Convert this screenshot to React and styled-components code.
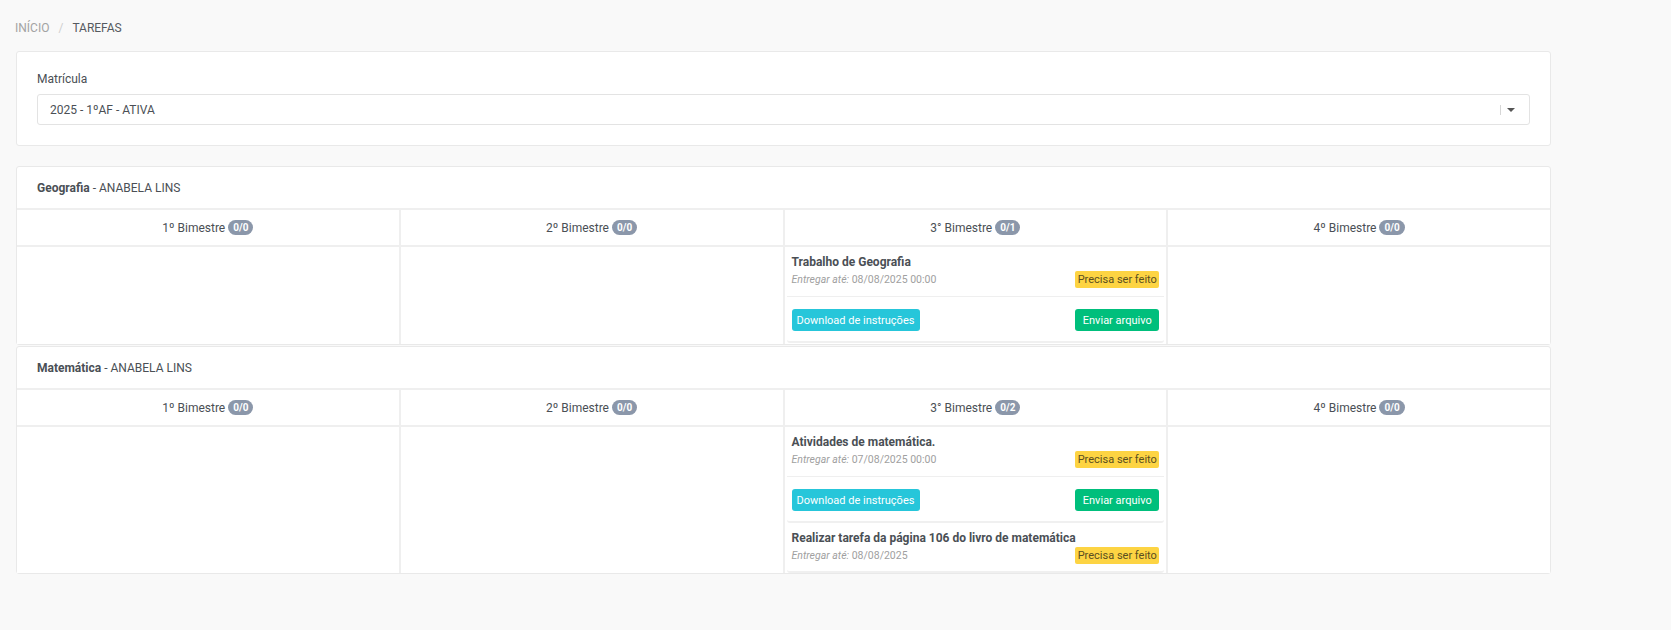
import React from "react"
import styled, { createGlobalStyle } from "styled-components"

const GlobalStyle = createGlobalStyle`
  body {
    margin: 0;
    background: #f9f9f9;
    font-family: Roboto, "Liberation Sans", sans-serif;
    color: #4a4f55;
    font-size: 12px;
  }
`

const Page = styled.div`
  width: 1536px;
  padding: 18px 0 40px 15px;
`
const Breadcrumb = styled.div`
  display: flex;
  align-items: center;
  gap: 9px;
  font-size: 12px;
  text-transform: uppercase;
  height: 20px;
  margin-bottom: 13px;
`
const Crumb = styled.span`
  color: ${p => (p.$active ? "#555a60" : "#a3a3a3")};
`
const Sep = styled.span`
  color: #cfcfcf;
`
const Card = styled.div`
  background: #fff;
  border: 1px solid #e9e9e9;
  border-radius: 3px;
  margin-left: 1px;
  margin-bottom: ${p => p.$gap || "1px"};
`
const FilterBody = styled.div`
  padding: 20px 20px 20px 20px;
`
const Label = styled.div`
  font-size: 12px;
  color: #4a4f55;
  line-height: 14px;
  margin-bottom: 8px;
`
const Select = styled.div`
  height: 29px;
  border: 1px solid #e3e3e3;
  border-radius: 3px;
  display: flex;
  align-items: center;
  padding: 0 12px;
  font-size: 12px;
  color: #4a4f55;
`
const SelectValue = styled.span`
  flex: 1;
`
const SelectBar = styled.span`
  width: 1px;
  height: 10px;
  background: #d6d6d6;
  margin-right: 6px;
`
const Caret = styled.span`
  width: 0;
  height: 0;
  border-left: 4px solid transparent;
  border-right: 4px solid transparent;
  border-top: 4px solid #555;
  margin-right: 2px;
`
const SubjectHeader = styled.div`
  padding: 0 20px;
  height: 41px;
  display: flex;
  align-items: center;
  font-size: 12px;
  border-bottom: 2px solid #efefef;
`
const Strong = styled.b`
  font-weight: 700;
`
const Grid = styled.div`
  display: grid;
  grid-template-columns: repeat(4, 1fr);
  column-gap: 2px;
  background: #efefef;
`
const HeadCell = styled.div`
  background: #fff;
  height: 35px;
  display: flex;
  align-items: center;
  justify-content: center;
  gap: 3px;
  font-size: 12px;
  margin-bottom: 2px;
`
const Count = styled.span`
  background: #8b97aa;
  color: #fff;
  font-weight: 700;
  font-size: 10px;
  border-radius: 8px;
  padding: 1px 5px;
  line-height: 13px;
`
const BodyCell = styled.div`
  background: #fff;
  padding: 0 2px;
  min-height: 97px;
`
const Task = styled.div`
  padding: 6px 5px ${p => (p.$compact ? "7px" : "10px")};
  border-bottom: 2px solid #f0f0f0;
  border-radius: 3px;
`
const TaskTitle = styled.div`
  font-weight: 700;
  font-size: 12px;
  line-height: 18px;
  color: #4a4f55;
`
const DateRow = styled.div`
  display: flex;
  align-items: center;
  justify-content: space-between;
  height: 17px;
`
const DateText = styled.span`
  color: #a0a0a0;
  font-size: 10.5px;
`
const Italic = styled.i`
  font-style: italic;
`
const Status = styled.span`
  background: #fdd443;
  color: #5a4e20;
  font-size: 11px;
  width: 84px;
  height: 17px;
  line-height: 17px;
  text-align: center;
  border-radius: 2px;
`
const Divider = styled.div`
  height: 1px;
  background: #efefef;
  margin: 8px -5px 12px;
`
const Actions = styled.div`
  display: flex;
  justify-content: space-between;
`
const Button = styled.button`
  border: none;
  border-radius: 3px;
  color: #fff;
  font-family: inherit;
  font-size: 11px;
  height: 22px;
  padding: 0;
  width: ${p => p.$w};
  background: ${p => p.$bg};
`

const subjects = [
  {
    name: "Geografia",
    teacher: "ANABELA LINS",
    counts: ["0/0", "0/0", "0/1", "0/0"],
    tasks: [
      { title: "Trabalho de Geografia", date: "08/08/2025 00:00", actions: true },
    ],
  },
  {
    name: "Matemática",
    teacher: "ANABELA LINS",
    counts: ["0/0", "0/0", "0/2", "0/0"],
    tasks: [
      { title: "Atividades de matemática.", date: "07/08/2025 00:00", actions: true },
      { title: "Realizar tarefa da página 106 do livro de matemática", date: "08/08/2025", actions: false },
    ],
  },
]

const terms = ["1º Bimestre", "2º Bimestre", "3° Bimestre", "4º Bimestre"]

function TaskItem({ task }) {
  return (
    <Task $compact={!task.actions}>
      <TaskTitle>{task.title}</TaskTitle>
      <DateRow>
        <DateText>
          <Italic>Entregar até:</Italic> {task.date}
        </DateText>
        <Status>Precisa ser feito</Status>
      </DateRow>
      {task.actions && (
        <>
          <Divider />
          <Actions>
            <Button $bg="#26c6da" $w="128px">Download de instruções</Button>
            <Button $bg="#00bf7c" $w="84px">Enviar arquivo</Button>
          </Actions>
        </>
      )}
    </Task>
  )
}

export default function App() {
  return (
    <Page>
      <GlobalStyle />
      <Breadcrumb>
        <Crumb>Início</Crumb>
        <Sep>/</Sep>
        <Crumb $active>Tarefas</Crumb>
      </Breadcrumb>

      <Card $gap="20px">
        <FilterBody>
          <Label>Matrícula</Label>
          <Select>
            <SelectValue>2025 - 1ºAF - ATIVA</SelectValue>
            <SelectBar />
            <Caret />
          </Select>
        </FilterBody>
      </Card>

      {subjects.map(subject => (
        <Card key={subject.name}>
          <SubjectHeader>
            <span>
              <Strong>{subject.name}</Strong> - {subject.teacher}
            </span>
          </SubjectHeader>
          <Grid>
            {terms.map((term, i) => (
              <HeadCell key={term}>
                {term} <Count>{subject.counts[i]}</Count>
              </HeadCell>
            ))}
            {terms.map((term, i) => (
              <BodyCell key={term}>
                {i === 2 && subject.tasks.map(t => <TaskItem key={t.title} task={t} />)}
              </BodyCell>
            ))}
          </Grid>
        </Card>
      ))}
    </Page>
  )
}
